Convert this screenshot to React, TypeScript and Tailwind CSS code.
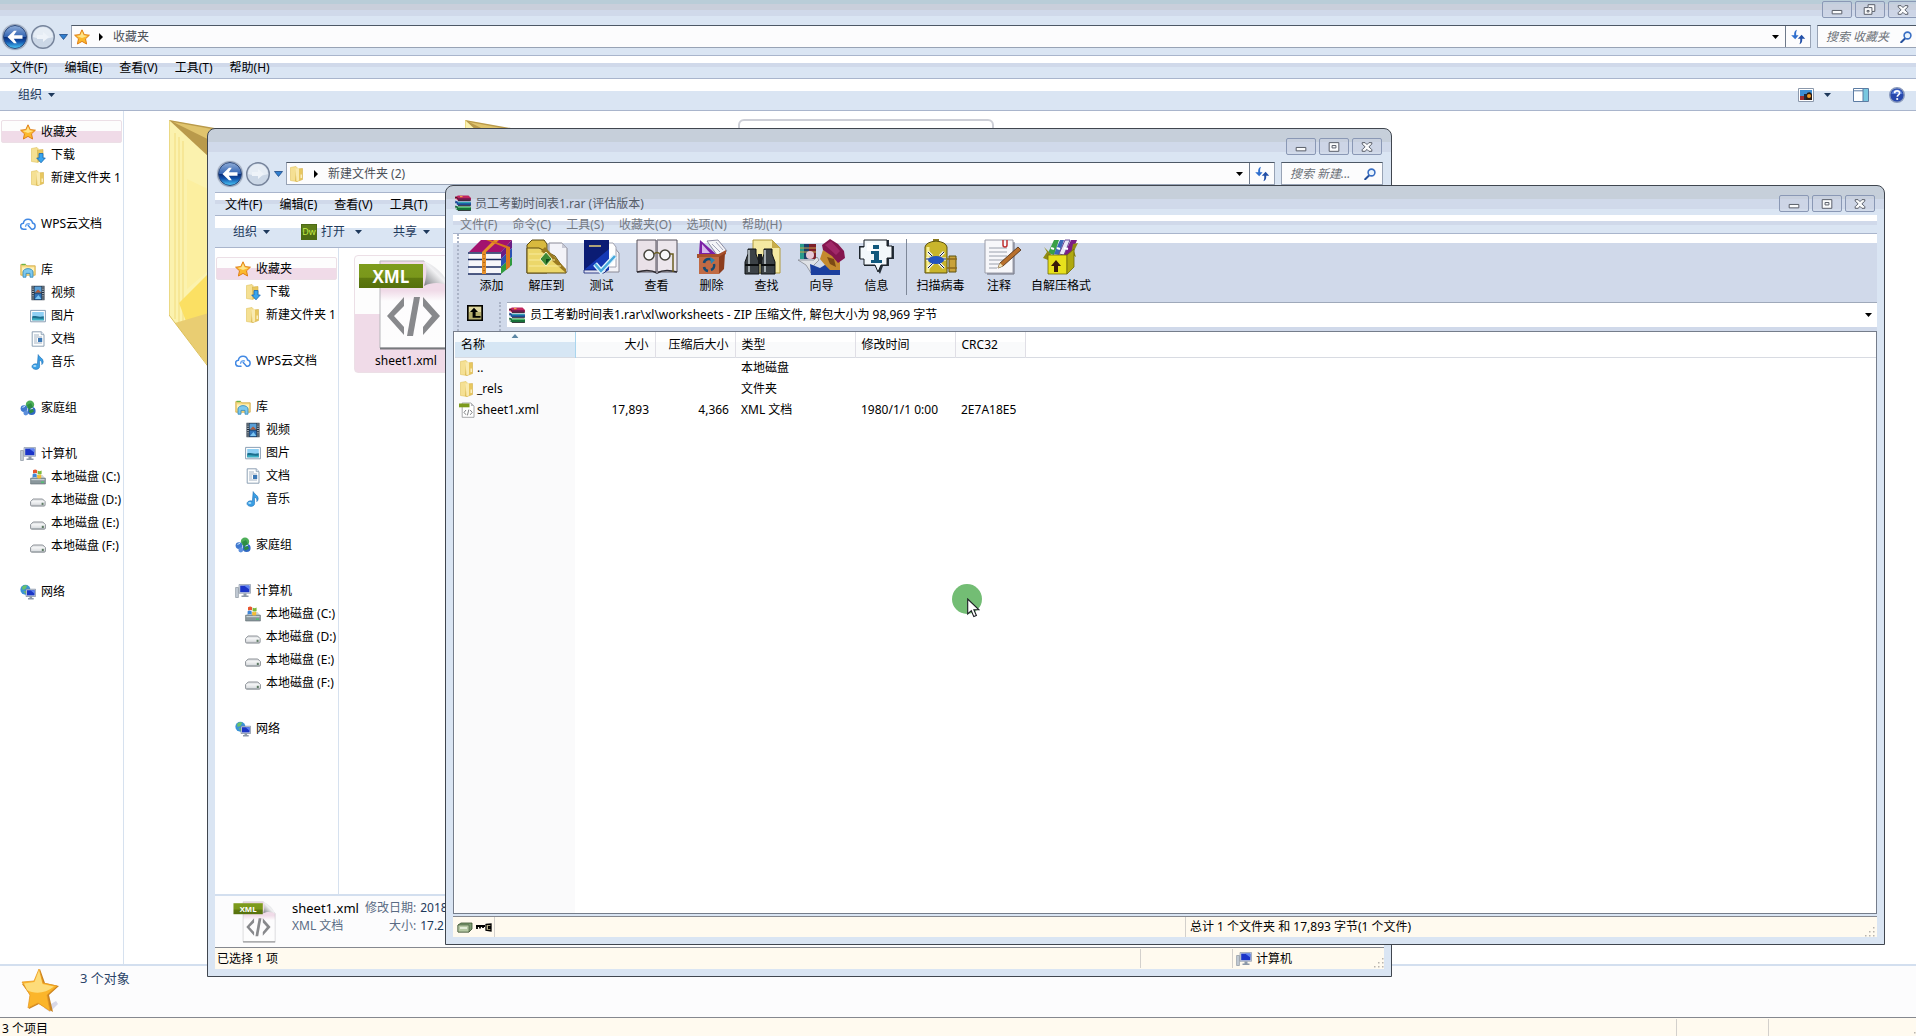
import type { ReactNode } from "react";
import clsx from "clsx";

/* ---------- small 16px icons ---------- */

type IconProps = { className?: string };

const StarIcon = ({ className = "size-4" }: IconProps) => (
  <svg viewBox="0 0 16 16" className={className}>
    <path d="M8 .8 10.2 5.6 15.4 6.2 11.5 9.8 12.6 15 8 12.4 3.4 15 4.5 9.8.6 6.2 5.8 5.6Z" fill="#fbb92c" stroke="#e07f17" strokeWidth="1" strokeLinejoin="round" />
    <path d="M8 2.6 9.6 6.3 13.4 6.9 8 9 2.6 6.9 6.4 6.3Z" fill="#fee48b" />
  </svg>
);

const FolderIcon = ({ className = "size-4" }: IconProps) => (
  <svg viewBox="0 0 16 16" className={className}>
    <path d="M1.5 1.5 7 .5 8 1.5V15.5L1.5 14.5Z" fill="#f5e093" stroke="#e0c25c" strokeWidth=".6" />
    <path d="M7.500 3 13.5 2.5V13.5L8 15.5 6.5 15Z" fill="#e8c75f" stroke="#d3b04a" strokeWidth=".6" />
    <path d="M6.5 2.5 10 2V14.6L7.5 15.3Z" fill="#f9eab0" />
    <path d="M11.6 8.5h1.2v3.5h-1.2z" fill="#fff7d8" />
  </svg>
);

const DownloadIcon = () => (
  <svg viewBox="0 0 16 16" className="size-4">
    <path d="M1.5 1.5 7 .5 8 1.5V15.5L1.5 14.5Z" fill="#f5e093" stroke="#e0c25c" strokeWidth=".6" />
    <path d="M7.5 3 13 2.5V13L8 15Z" fill="#e8c75f" stroke="#d3b04a" strokeWidth=".6" />
    <path d="M9 6.5h4v4.5h2.3L11 15.8 6.7 11H9Z" fill="#38a5ee" stroke="#1668b4" strokeWidth=".8" />
  </svg>
);

const CloudIcon = () => (
  <svg viewBox="0 0 16 16" className="size-4" fill="none" stroke="#4289e4" strokeWidth="1.5" strokeLinecap="round">
    <path d="M6 13.2H3.8a3 3 0 0 1-.4-6A4.7 4.7 0 0 1 12.6 7a3.2 3.2 0 0 1 .2 6.2h-1.2L8.2 9.6" />
    <path d="M5.6 10.2A2.6 2.6 0 0 1 9.4 8" stroke="#6ba6f0" />
  </svg>
);

const LibraryIcon = () => (
  <svg viewBox="0 0 16 16" className="size-4">
    <path d="M.8 2.6h5l1 1.2h8.4v9.4H.8Z" fill="#f7dc82" stroke="#d0a63d" strokeWidth=".8" />
    <path d="M1.6 1.8h4v1.4h-4z" fill="#69b34a" />
    <path d="M2 5.4h12v4H2z" fill="#fdf1bc" />
    <path d="M3 15.2V10a5 3.4 0 0 1 10 0v5.2h-3V11.4H6v3.8Z" fill="#7cc8ee" stroke="#3187b8" strokeWidth=".8" />
  </svg>
);

const VideoIcon = () => (
  <svg viewBox="0 0 16 16" className="size-4">
    <path d="M1.5.8h13v14.4h-13z" fill="#1e2b3a" />
    <path d="M4.5 1.5h7v6h-7z" fill="#5a9fd6" />
    <path d="M4.5 8.4h7v6.2h-7z" fill="#2e72b8" />
    <path d="M5 7.4 8 4.6l3.4 2.8Z" fill="#b05a3a" />
    <path d="M5 14 8.4 10l3 4Z" fill="#7cc5f2" />
    <path d="M3 1.4V15M13 1.4V15" stroke="#eef3f7" strokeWidth="1.2" strokeDasharray="1.2 1" />
  </svg>
);

const PictureIcon = () => (
  <svg viewBox="0 0 16 16" className="size-4">
    <path d="M.6 2.4h14.8v11.4H.6z" fill="#fff" stroke="#7f96ae" strokeWidth=".9" />
    <path d="M2.2 4h11.6v8.2H2.2z" fill="#8fd0f4" />
    <path d="M2.2 8.6c3-1.6 5.6 1 11.6-.4v4H2.2Z" fill="#1d6f8e" />
    <path d="M2.2 10.6c4-.8 7 .8 11.6 0v1.6H2.2Z" fill="#3bb0c4" />
  </svg>
);

const DocIcon = () => (
  <svg viewBox="0 0 16 16" className="size-4">
    <path d="M2.2.8h9l2.8 2.8v11.6H2.2Z" fill="#fdfefe" stroke="#8296ab" strokeWidth=".9" />
    <path d="M11.2.8v2.8H14" fill="#dbe6f0" stroke="#8296ab" strokeWidth=".7" />
    <path d="M4 4h5M4 6h8M4 8h3M4 10h3M4 12h8" stroke="#9bacbd" strokeWidth=".9" />
    <path d="M8 7h4.2v4H8z" fill="#3c78b5" />
  </svg>
);

const MusicIcon = () => (
  <svg viewBox="0 0 16 16" className="size-4">
    <path d="M8.2.6c.6 2.6 5.2 3.4 5 7.2-.1 1.4-.8 2.2-1.4 2.8.6-2.6-.8-4-2.4-4.4l.2 6.2c0 2-1.8 3-3.8 3S2 14.2 2 12.6s1.6-2.8 3.8-2.8c.8 0 1.4.2 1.6.4Z" fill="#3b9fe4" stroke="#1a6cb6" strokeWidth=".6" />
    <ellipse cx="4.8" cy="12" rx="1.6" ry="1" fill="#a9dcfa" />
  </svg>
);

const HomegroupIcon = () => (
  <svg viewBox="0 0 16 16" className="size-4">
    <circle cx="10" cy="4.8" r="4.2" fill="#4dae58" />
    <circle cx="4" cy="8.6" r="3.4" fill="#3f78cf" />
    <circle cx="11.6" cy="11" r="4" fill="#3168c4" />
    <circle cx="5.8" cy="13" r="2.4" fill="#5c8fdc" />
    <path d="M7 5 11 3l2 4-4 3ZM8.5 11l4-2.5 1.5 3-3.5 2Z" fill="#2c8d43" />
    <path d="M2.4 7.4 5 6.4M10.5 9 13 8.2" stroke="#cfe6fa" strokeWidth="1" />
  </svg>
);

const ComputerIcon = () => (
  <svg viewBox="0 0 16 16" className="size-4 shrink-0">
    <path d="M.6 4.5h2.8v10H.6z" fill="#c3ccd6" stroke="#7d8894" strokeWidth=".6" />
    <path d="M4 1.5h11.5v8.8H4z" fill="#cfd8e3" stroke="#7d8ba0" strokeWidth=".6" />
    <path d="M5.2 2.6h9.2v6.6H5.2z" fill="#1b35c8" />
    <path d="M9 2.6h5.4v4Z" fill="#5f83f0" />
    <path d="M8.5 10.5h3v2h2v1.5h-7v-1.5h2Z" fill="#8c98a8" />
  </svg>
);

const SystemDiskIcon = () => (
  <svg viewBox="0 0 16 16" className="size-4">
    <path d="M1.5 9 4 6h8.5L15 9Z" fill="#cfd6da" />
    <path d="M.6 9.2h14.8V15H.6Z" fill="#8a979c" stroke="#5d696e" strokeWidth=".6" />
    <path d="M1.4 10h13.2v1.2H1.4z" fill="#c5d0d3" />
    <path d="M11 12.5h3v1.3h-3z" fill="#49c86a" />
    <path d="M3 1.2c1.5-.8 3-.8 4 0v3.4c-1.4-.8-2.8-.6-4 0Z" fill="#e8562f" />
    <path d="M7.6 1.6c1.2.8 2.4.8 4 0V5c-1.4.8-2.8.6-4 0Z" fill="#7cb83c" />
    <path d="M2.6 5.2c1.5-.8 3-.8 4 0v3.4c-1.4-.8-2.8-.6-4 0Z" fill="#3f86d8" />
    <path d="M7.2 5.6c1.2.8 2.4.8 4 0V9c-1.4.8-2.8.6-4 0Z" fill="#f6bd33" />
  </svg>
);

const DiskIcon = () => (
  <svg viewBox="0 0 16 16" className="size-4">
    <path d="M3.2 7h9.6l2.6 2.6V13c0 .8-.4 1.2-1.2 1.2H1.8c-.8 0-1.2-.4-1.2-1.2V9.6Z" fill="#e6e8ea" stroke="#7f858b" strokeWidth=".9" />
    <path d="M1.2 9.9h13.6" stroke="#fff" strokeWidth=".8" />
    <path d="M1.2 13.4h13.6" stroke="#a3a9ae" strokeWidth="1" />
    <path d="M11.8 10.8h2V13h-2z" fill="#5d7a63" />
  </svg>
);

const NetworkIcon = () => (
  <svg viewBox="0 0 16 16" className="size-4">
    <circle cx="5.4" cy="5.8" r="5" fill="#3b93d6" />
    <path d="M2 3c2-2.4 4-2 5.4-1.4L5.4 5 2.6 6Zm1.5 4.5L6 7v3Z" fill="#69c26a" />
    <path d="M6 5.2h9.6v7.3H6z" fill="#cfd8e3" stroke="#6c7b92" strokeWidth=".6" />
    <path d="M7 6.2h7.6v5.2H7z" fill="#1c37c6" />
    <path d="M10.5 6.2h4.1v3.5Z" fill="#5f83f0" />
    <path d="M9.5 12.5h2.6v1.5h1.6v1.4H8v-1.4h1.5Z" fill="#8c98a8" />
  </svg>
);

const RarIcon = () => (
  <svg viewBox="0 0 16 16" className="size-4 shrink-0">
    <path d="M0 2 3 .4H13.5L16 3v2l-1.5.6L3 5.6 0 4Z" fill="#c0265e" />
    <path d="M3 3.2h12.5v2H3z" fill="#6b1a4e" />
    <path d="M0 2 3 3.4M0 7l3 1.2M0 11.6l3 1.4" stroke="#111" strokeWidth=".8" />
    <path d="M.4 5.6 3 6.8h12.5L16 8.4v1.8H3L.4 8.8Z" fill="#1c4fa0" />
    <path d="M3 7.2h12.5v1H3z" fill="#36b8b4" />
    <path d="M.4 10.4 3 11.6h12.5l.5 1.6V15.5H3L.4 14Z" fill="#17713a" />
    <path d="M3 12h12.5v1H3z" fill="#4fc06a" />
    <path d="M3 5.6h12.8M3 10.4h12.8M3 15.6h12.8" stroke="#16121c" strokeWidth=".8" />
    <path d="M1 3.8v1.5M1 8.2v1.6M1 12.8v1.4" stroke="#e9e9ec" strokeWidth="1.2" />
    <path d="M5 1h2.5v1.2H5z" fill="#f0a03c" />
  </svg>
);

const SmallXmlIcon = () => (
  <svg viewBox="0 0 16 16" className="size-4">
    <path d="M3.2 1H12l3 3v11.3H3.2Z" fill="#fff" stroke="#909396" strokeWidth=".8" />
    <path d="M0 1.5h10.5v3.8H0z" fill="#7c9a1d" />
    <path d="M12 1v3h3Z" fill="#b9bcc0" />
    <path d="M7 8 5 10.4 7 12.8M11.2 8l2 2.4-2 2.4M9.8 7.6l-1.4 5.8" fill="none" stroke="#808285" strokeWidth="1" />
  </svg>
);

const XmlFileIcon = ({ className }: IconProps) => (
  <svg viewBox="0 0 96 96" className={className}>
    <defs>
      <linearGradient id="page" x1="0" y1="0" x2="0" y2="1">
        <stop offset="0" stopColor="#f0dbe8" />
        <stop offset=".34" stopColor="#f0dbe8" />
        <stop offset=".46" stopColor="#fdfcfd" />
        <stop offset="1" stopColor="#fdfdfd" />
      </linearGradient>
      <linearGradient id="xmlband" x1="0" y1="0" x2="0" y2="1">
        <stop offset="0" stopColor="#7d9c1d" />
        <stop offset=".55" stopColor="#7a971b" />
        <stop offset=".6" stopColor="#5f7a10" />
        <stop offset="1" stopColor="#55700c" />
      </linearGradient>
      <linearGradient id="curl" x1="0" y1="1" x2="1" y2="0">
        <stop offset="0" stopColor="#77797d" />
        <stop offset=".5" stopColor="#f1f1f3" />
        <stop offset="1" stopColor="#b8babd" />
      </linearGradient>
    </defs>
    <path d="M22 4H66L92 29V91H22Z" fill="url(#page)" stroke="#b7b7bb" strokeWidth="1" />
    <path d="M22 91.5H92" stroke="#77797d" strokeWidth="2" />
    <path d="M66 4C70 12 68 22 66 29 76 24 86 26 92 30 88 18 76 8 66 4Z" fill="url(#curl)" />
    <path d="M1 7H65V31H1Z" fill="url(#xmlband)" />
    <path d="M46 40 29 59 46 78V70L36 59 46 49Z" fill="#88898c" />
    <path d="M65 40 82 59 65 78V70L74 59 65 49Z" fill="#88898c" />
    <path d="M56 40H62L55 79H49Z" fill="#88898c" />
    <text x="33" y="25.5" textAnchor="middle" fontSize="17" fontWeight="700" fill="#fff" fontFamily="Open Sans, sans-serif">XML</text>
  </svg>
);

const BigStar = () => (
  <svg viewBox="0 0 40 46" className="h-[46px] w-10">
    <path d="M24 40 36 33 38 36 30 44Z" fill="#c9c9dd" opacity=".7" />
    <path d="M20 1 25 15 39 18 29 27 33 44 19 36 9 41 10 27 2 16 15 14Z" fill="#c98320" />
    <path d="M19 1 23 15 37 18 27 27 30 43 18 35 8 40 10 27 2 14 14 13Z" fill="#fbb52a" stroke="#e89a24" strokeWidth=".8" />
    <path d="M19 2 22.5 16 34 18.5C25 26 14 26 7 22L4 15.5 14.5 14Z" fill="#fddc7a" />
  </svg>
);

const BigFolder = () => (
  <svg viewBox="0 0 256 256" className="size-64">
    <path d="M0 1 120 24V214L52 262 0 196Z" fill="#fbf2ae" />
    <path d="M0 1 120 22V112Z" fill="#b99a4b" />
    <path d="M4 3 120 24V60Z" fill="#e0c46d" />
    <path d="M6 14V200M10 18V205M14 22V210" stroke="#f3df86" strokeWidth="1.2" />
    <path d="M18 60V170L60 134V80Z" fill="#fcefa0" />
    <path d="M10 184 60 134V220L20 210Z" fill="#fbe063" />
    <path d="M6 204 60 188V256H46Z" fill="#e9cd72" />
    <path d="M0 1V196L44 254" fill="none" stroke="#dcc05c" strokeWidth="1" />
  </svg>
);

const DwIcon = () => (
  <svg viewBox="0 0 16 16" className="size-4">
    <path d="M0 0h16v16H0z" fill="#4c6a14" />
    <path d="M1 1h14v7H1z" fill="#5d7d1a" />
    <text x="8" y="11" textAnchor="middle" fontSize="9" fill="#c8f04a" fontFamily="Open Sans, sans-serif">Dw</text>
  </svg>
);

const ThumbIcon = () => (
  <svg viewBox="0 0 16 14" className="h-3.5 w-4">
    <path d="M.5.5h15v13H.5z" fill="#fff" stroke="#8b98ab" />
    <path d="M2 2h12v10H2z" fill="#3d8fd6" />
    <path d="M2 8h4v4H2z" fill="#9c2f33" />
    <path d="M6 6h3v6H6z" fill="#232a3a" />
    <path d="M9 5c3-2 5 0 5 2v5H8Z" fill="#2a1c14" />
    <circle cx="11" cy="8" r="2" fill="#f09a2a" />
  </svg>
);

const PreviewPaneIcon = () => (
  <svg viewBox="0 0 16 14" className="h-3.5 w-4">
    <path d="M.5.5h15v13H.5z" fill="#fff" stroke="#5c7ca3" />
    <path d="M1 2.8h9" stroke="#5c7ca3" />
    <path d="M10 1h5v12h-5z" fill="#79c7df" />
    <path d="M10 1v12" stroke="#5c7ca3" />
  </svg>
);

const HelpIcon = () => (
  <svg viewBox="0 0 16 16" className="size-4">
    <circle cx="8" cy="8" r="7.3" fill="#2748ad" stroke="#8b9bbd" strokeWidth="1.4" />
    <path d="M2.5 7a5.6 5.6 0 0 1 11 0Z" fill="#5a7fd8" />
    <path d="M5.6 6.2C5.6 3.2 10.6 3.2 10.6 6c0 2-2.3 1.9-2.3 3.8" fill="none" stroke="#fff" strokeWidth="1.7" />
    <circle cx="8.2" cy="12" r="1.1" fill="#fff" />
  </svg>
);

const Caret = ({ className = "text-[#1e395b]" }: IconProps) => (
  <svg viewBox="0 0 7 4" className={clsx("h-1 w-[7px]", className)}>
    <path d="M0 0h7L3.5 4Z" fill="currentColor" />
  </svg>
);

const RefreshIcon = () => (
  <svg viewBox="0 0 16 16" className="size-4">
    <path d="M7 .8C4.6 1.4 4 3.4 4.2 6.2H1.2L5.2 10.2 8.6 6.2H6.2C6 4 6.2 2.4 7 .8Z" fill="#2f6fce" />
    <path d="M9.4 15.2C11.8 14.6 12.4 12.6 12.2 9.8H15.2L11.6 5.8 7.8 9.8H10.2C10.4 12 10.2 13.6 9.4 15.2Z" fill="#2350a8" />
  </svg>
);

const SearchIcon = () => (
  <svg viewBox="0 0 12 12" className="size-3 shrink-0">
    <path d="M5 7.5 1.2 11.2" stroke="#25509c" strokeWidth="2" strokeLinecap="round" />
    <circle cx="7.5" cy="4.5" r="3.4" fill="#eaf4fd" stroke="#3a6fc4" strokeWidth="1.6" />
  </svg>
);

const Grip = () => (
  <svg viewBox="0 0 10 10" className="size-2.5 shrink-0 self-end" fill="#b9b4ae">
    <path d="M8 0h1.5v1.5H8zM8 4h1.5v1.5H8zM8 8h1.5v1.5H8zM4 4h1.5v1.5H4zM4 8h1.5v1.5H4zM0 8h1.5v1.5H0z" />
  </svg>
);

/* ---------- window chrome ---------- */

const controlGlyphs = {
  min: <path d="M9.5 8.5h10V12h-10z" />,
  max: <path d="M9.5 3.5h10v9h-10zM12.5 6.5h4V9h-4z" />,
  restore: <path d="M12.5 2.5h7v7h-3v3h-8v-7h4zM11.5 8.5h2v1.5h-2zM13 5.5h3.500V9" />,
  close: <path d="M9.5 3.5h3l2 2 2-2h3v1.5L16.5 7.8l3 3v1.7h-3l-2-2-2 2h-3v-1.7l3-3-3-2.8z" />,
};

const WindowControls = ({ maximized }: { maximized?: boolean }) => (
  <div className="flex gap-[3px]">
    {(["min", maximized ? "restore" : "max", "close"] as const).map((kind) => (
      <button key={kind} aria-label={kind} className="h-[17px] w-[30px] rounded-[2px] border border-[#8a98b5] bg-[#c9d2e2]/50">
        <svg viewBox="0 0 29 15" className="h-[15px] w-full" fill="#fafbfc" stroke="#565b66" strokeWidth="1">
          {controlGlyphs[kind]}
        </svg>
      </button>
    ))}
  </div>
);

const NavButtons = () => (
  <div className="flex h-6 w-[71px] items-center gap-1 pl-[3px]">
    <button aria-label="后退" className="size-6 rounded-full shadow-[0_0_1px_1px_#8f9bb0]">
      <svg viewBox="0 0 24 24" className="size-6">
        <defs>
          <linearGradient id="orb" x1="0" y1="0" x2="0" y2="1">
            <stop offset="0" stopColor="#8fadd8" />
            <stop offset=".48" stopColor="#3566b4" />
            <stop offset=".52" stopColor="#0a2f7c" />
            <stop offset=".7" stopColor="#1254ac" />
            <stop offset="1" stopColor="#4ccbfa" />
          </linearGradient>
        </defs>
        <circle cx="12" cy="12" r="11.5" fill="url(#orb)" stroke="#2c4777" />
        <path d="M4.5 12 11 5.8h2.8L10.8 10.2H19.5V13.8H10.8L13.8 18.2H11Z" fill="#fff" />
      </svg>
    </button>
    <button aria-label="前进" className="size-6 rounded-full">
      <svg viewBox="0 0 24 24" className="size-6">
        <circle cx="12" cy="12" r="11.3" fill="#cbd7e6" stroke="#76849b" strokeWidth="1.4" />
        <path d="M2 12a10 10 0 0 1 20 0c-6 2-14 2-20 0Z" fill="#e6edf5" />
        <path d="M6 10h6V7l6 5-6 5v-3H6Z" fill="#eef3f9" />
      </svg>
    </button>
    <button aria-label="最近的页面">
      <svg viewBox="0 0 9 6" className="h-1.5 w-[9px]">
        <path d="M.5.5h8L4.5 5.5Z" fill="#2f7fd0" stroke="#1d4a86" strokeWidth=".8" />
      </svg>
    </button>
  </div>
);

type SideItem = { label: string; icon: ReactNode; sub?: boolean; selected?: boolean };

const sideGroups: SideItem[][] = [
  [
    { label: "收藏夹", icon: <StarIcon />, selected: true },
    { label: "下载", icon: <DownloadIcon />, sub: true },
    { label: "新建文件夹 1", icon: <FolderIcon />, sub: true },
  ],
  [{ label: "WPS云文档", icon: <CloudIcon /> }],
  [
    { label: "库", icon: <LibraryIcon /> },
    { label: "视频", icon: <VideoIcon />, sub: true },
    { label: "图片", icon: <PictureIcon />, sub: true },
    { label: "文档", icon: <DocIcon />, sub: true },
    { label: "音乐", icon: <MusicIcon />, sub: true },
  ],
  [{ label: "家庭组", icon: <HomegroupIcon /> }],
  [
    { label: "计算机", icon: <ComputerIcon /> },
    { label: "本地磁盘 (C:)", icon: <SystemDiskIcon />, sub: true },
    { label: "本地磁盘 (D:)", icon: <DiskIcon />, sub: true },
    { label: "本地磁盘 (E:)", icon: <DiskIcon />, sub: true },
    { label: "本地磁盘 (F:)", icon: <DiskIcon />, sub: true },
  ],
  [{ label: "网络", icon: <NetworkIcon /> }],
];

const Sidebar = () => (
  <nav className="flex w-[124px] shrink-0 flex-col gap-[23px] overflow-hidden border-r border-[#d6e1ef] px-px pt-[9px]">
    {sideGroups.map((group) => (
      <ul key={group[0].label}>
        {group.map((item) => (
          <li key={item.label}>
            <a
              href="#"
              className={clsx(
                "flex h-[23px] items-center gap-[5px] whitespace-nowrap border",
                item.sub ? "pl-7" : "pl-[18px]",
                item.selected
                  ? "rounded-xs border-[#ecdfe6] bg-[linear-gradient(#fdfdfd_50%,#f0dbe8_50%)]"
                  : "border-transparent"
              )}
            >
              {item.icon}
              {item.label}
            </a>
          </li>
        ))}
      </ul>
    ))}
  </nav>
);

interface ExplorerProps {
  maximized?: boolean;
  pathIcon: ReactNode;
  path: string;
  search: string;
  menus: string[];
  toolbar: ReactNode;
  details: ReactNode;
  status: string;
  statusRight?: ReactNode;
  children: ReactNode;
}

const Explorer = ({
  maximized,
  pathIcon,
  path,
  search,
  menus,
  toolbar,
  details,
  status,
  statusRight,
  children,
}: ExplorerProps) => (
  <>
    <header className="h-[55px] shrink-0">
      <div className="flex h-[25px] justify-end pr-0.5 pt-px">
        <WindowControls maximized={maximized} />
      </div>
      <div className="flex">
        <NavButtons />
        <div className="flex h-[23px] flex-1 items-center border border-[#98a3b5] border-t-[#4d5866] bg-[#fcfcfd] pl-0.5 text-[#4b5058]">
          {pathIcon}
          <svg viewBox="0 0 4 8" className="ml-[9px] h-2 w-1">
            <path d="M0 0 4 4 0 8Z" fill="#000" />
          </svg>
          <span className="ml-2.5 flex-1">{path}</span>
          <button aria-label="展开" className="mr-1 px-0.5">
            <Caret className="text-black" />
          </button>
          <button aria-label="刷新" className="flex h-full w-[25px] items-center justify-center border-l border-[#6f7a8b]">
            <RefreshIcon />
          </button>
        </div>
        <label className="ml-1.5 mr-px flex h-[23px] w-[102px] items-center border border-[#98a3b5] border-t-[#4d5866] bg-[#fcfcfd] pl-2 pr-1.5">
          <input aria-label={search} placeholder={search} className="w-0 flex-1 text-xs italic outline-none placeholder:text-[#6d7279]" />
          <SearchIcon />
        </label>
      </div>
    </header>
    <div className="flex h-6 shrink-0 items-center gap-[17px] border-y border-[#a9b5cc] bg-[linear-gradient(#fff_0_7px,#d0d9ea_7px_11px,#dae5f3_11px)] pl-2.5 pt-0.5">
      {menus.map((m) => (
        <button key={m}>{m}</button>
      ))}
    </div>
    <div className="flex h-8 shrink-0 items-center border-b border-[#a9b5cc] bg-[linear-gradient(#fff_12px,#dae5f3_12px)] pl-[18px] text-[#1e395b]">
      {toolbar}
    </div>
    <div className="flex min-h-0 flex-1 bg-white">
      <Sidebar />
      <div className="min-w-0 flex-1 overflow-hidden">{children}</div>
    </div>
    <div className="flex h-[53px] shrink-0 border-t-2 border-[#d3dfef] bg-[#fcfcfd]">{details}</div>
    <footer className="flex h-[22px] shrink-0 items-center border-t border-[#85888f] bg-[#fffaef]">
      <span className="flex-1 pl-0.5">{status}</span>
      <span className="h-[19px] w-[92px] border-l border-[#d3d0cc]" />
      <span className="flex h-[19px] w-[152px] items-center gap-1 border-l border-[#d3d0cc] pl-[3px]">
        {statusRight}
        <span className="flex-1" />
        <Grip />
      </span>
    </footer>
  </>
);

const ToolButton = ({ children, className }: { children: ReactNode; className?: string }) => (
  <button className={clsx("flex items-center", className)}>
    {children}
    <Caret />
  </button>
);

/* ---------- WinRAR ---------- */

const rarTools: { label: string; width: string; icon: ReactNode }[] = [
  {
    label: "添加",
    width: "w-[55px]",
    icon: (
      <g transform="translate(-2 0)">
        <path d="M1 13 13 1H44L33 13Z" fill="#a3126e" />
        <path d="M33 13 44 1V9L33 20Z" fill="#6a1d84" />
        <path d="M33 20 44 9V18L33 28Z" fill="#2a52b4" />
        <path d="M33 28 44 18V26L33 35Z" fill="#2f9a3e" />
        <path d="M1 14H33V35H1Z" fill="#f6f6fa" />
        <path d="M0 14H33M0 20.5H33M0 28H33M0 35H33" stroke="#1a2a5e" strokeWidth="1.4" />
        <path d="M14 13 26 1H31L18 13V35H14Z" fill="#e58f2a" />
        <path d="M18 1 22 1 42 8V28L38 31V9Z" fill="#d9781c" />
        <path d="M16 15V34" stroke="#7c4510" strokeDasharray="1 3" />
      </g>
    ),
  },
  {
    label: "解压到",
    width: "w-[55px]",
    icon: (
      <>
        <path d="M24 4h13l5 5v24H24Z" fill="#f3f3f8" stroke="#8a8a96" />
        <path d="M37 4v5h5" fill="#c6c8d4" />
        <path d="M2 6 7 1h12l3 4v29H2Z" fill="#d8b93e" stroke="#5c4a10" />
        <path d="M2 9 14 9 30 17 41 33V34H2Z" fill="#ecd76a" stroke="#5c4a10" />
        <path d="M20 8 41 30V34L16 12Z" fill="#9a7a20" />
        <path d="M4 15h18M4 21h26M4 27h32" stroke="#f8eb9c" />
        <path d="M21 13 27 20 21 27 15 20Z" fill="#3e8a36" stroke="#f7f2c4" />
        <path d="M21 20 25 20 21 25Z" fill="#0f4a1a" />
      </>
    ),
  },
  {
    label: "测试",
    width: "w-[55px]",
    icon: (
      <g transform="translate(-1 0)">
        <path d="M20 7h14l6 7v19H20Z" fill="#f3f3f8" stroke="#8a8a96" />
        <path d="M24 4h10l3 4v20H24Z" fill="#fff" stroke="#a0a2b0" />
        <path d="M5 1H30V31L25 34H5Z" fill="#1538b4" />
        <path d="M5 1H30V10L5 31Z" fill="#0b1c74" />
        <path d="M5 31H28L25 34H5Z" fill="#dfe2f0" stroke="#0b1c74" strokeWidth=".8" />
        <path d="M10 7h12" stroke="#e6cf7a" strokeWidth="1.5" />
        <path d="M16 25 22 32 36 17" fill="none" stroke="#dff4ff" strokeWidth="5" />
        <path d="M16 25 22 32 36 17" fill="none" stroke="#46a8dc" strokeWidth="2.5" />
      </g>
    ),
  },
  {
    label: "查看",
    width: "w-[55px]",
    icon: (
      <>
        <path d="M2 1H21V33H2Z" fill="#e9e1e8" stroke="#55505a" />
        <path d="M22 1H42V33H22Z" fill="#ece6ec" stroke="#55505a" />
        <path d="M2 33c7-2 15-2 20 1 5-3 13-3 20-1" fill="none" stroke="#2c2a30" strokeWidth="1.5" />
        <path d="M22 1V34" stroke="#8c8792" strokeWidth="2" />
        <circle cx="14" cy="16" r="5" fill="#f8f8fa" stroke="#45443c" strokeWidth="1.5" />
        <circle cx="30" cy="16" r="5" fill="#f8f8fa" stroke="#45443c" strokeWidth="1.5" />
        <path d="M19 15q3-3 6 0M35 15h3v18" fill="none" stroke="#6b5f22" strokeWidth="1.5" />
      </>
    ),
  },
  {
    label: "删除",
    width: "w-[55px]",
    icon: (
      <>
        <path d="M10 1 26 15H9Z" fill="#7b1fa6" />
        <path d="M12 5 20 14H12Z" fill="#d7b6ea" />
        <path d="M17 2 28 1 37 12 27 16Z" fill="#f4f4f8" stroke="#8c8ca0" />
        <path d="M22 5 30 13M26 3l7 8" stroke="#a0a4b8" />
        <path d="M7 15H29L36 11V15L29 19H7Z" fill="#a7502c" />
        <path d="M9 18H29V35H9Z" fill="#c06a44" />
        <path d="M29 18 35 14 34 30 29 35Z" fill="#8c3d1e" />
        <path d="M14 24a5 5 0 0 1 8-3M24 25a5 5 0 0 1-3 6M18 32a5 5 0 0 1-4-4" fill="none" stroke="#134a74" strokeWidth="2.5" />
        <path d="M20 18l5 3-4 4Z" fill="#2d84b0" />
      </>
    ),
  },
  {
    label: "查找",
    width: "w-[55px]",
    icon: (
      <g transform="translate(-5 0)">
        <path d="M13 1H32L40 9V34H13Z" fill="#f4e9a2" stroke="#b09a3c" />
        <path d="M32 1V9H40Z" fill="#c8ad4a" />
        <path d="M8 10h8v5l3 8v12H5V23l3-8ZM24 10h8v5l3 8v12H21V23l3-8Z" fill="#3c4246" stroke="#0f1214" />
        <path d="M18 15h4v10h-4z" fill="#191c1e" />
        <path d="M9 11v22M25 11v22" stroke="#a4acb0" strokeWidth="2" />
        <path d="M5 26h14M21 26h14" stroke="#0b0d0e" strokeWidth="2" />
      </g>
    ),
  },
  {
    label: "向导",
    width: "w-[55px]",
    icon: (
      <g transform="translate(-2 0)">
        <path d="M2 5H6V20H2Z" fill="#2a9a8c" />
        <path d="M6 5H11V20H6Z" fill="#1c3e6a" />
        <path d="M11 5H18V20H11Z" fill="#7c1f2a" />
        <path d="M2 9h16M2 13h16" stroke="#c9a34a" />
        <circle cx="12" cy="16" r="4" fill="#e6c8d6" />
        <path d="M0 21h16l3-3 2 3-5 5-3 8-5-8Z" fill="#dfe2e6" stroke="#7c7f88" strokeWidth=".7" />
        <path d="M12 25 22 29 30 24 42 30V36H13Z" fill="#1b3f9e" />
        <path d="M25 11 36 17 42 20V31L32 31 27 26 22 20Z" fill="#c48a2e" />
        <path d="M29 18 36 20 38 28 32 25Z" fill="#7c4a14" />
        <path d="M24 6 32 0 40 5 46 12 47 19 40 24 34 17 25 11Z" fill="#84164e" />
        <path d="M27 6 33 2 42 12 38 16Z" fill="#a02868" />
      </g>
    ),
  },
  {
    label: "信息",
    width: "w-[55px]",
    icon: (
      <>
        <path d="M9 1H34V7H39V20H34V27H28L25 35 20 27H9V20H4V7H9Z" fill="#26303a" />
        <path d="M9 1H32V7H37V19H32V26H26L23 33 20 26H9V20H5V8H9Z" fill="#f3f8fb" stroke="#161c22" />
        <path d="M12 4H20V12H12Z" fill="#fff" />
        <path d="M18 6h6v4h-6zM16 12h8v9h3v3H16v-3h3v-6h-3z" fill="#11587c" />
      </>
    ),
  },
];

const rarExtras: typeof rarTools = [
  {
    label: "扫描病毒",
    width: "w-[65px]",
    icon: (
      <g transform="translate(-3 0)">
        <path d="M17 0h6v3h-6z" fill="#8a7a1c" />
        <path d="M9 8Q10 3 20 2 30 3 31 8V34H9Z" fill="#c9b52c" stroke="#5c5210" />
        <path d="M12 8v25" stroke="#f6ee94" strokeWidth="3" />
        <path d="M33 17H40V33H33Z" fill="#c9a23a" stroke="#5c5210" />
        <path d="M31 20h10M31 29h10" stroke="#8c6a1c" strokeWidth="1.5" />
        <path d="M12 13l4 4M28 13l-4 4M10 20h20M12 29l5-5M28 29l-5-5" stroke="#f2f6fd" strokeWidth="3" />
        <path d="M12 13l4 4M28 13l-4 4M10 20h20M12 29l5-5M28 29l-5-5" stroke="#16213e" strokeWidth="1" />
        <ellipse cx="20" cy="21" rx="8" ry="4" fill="#2454c0" />
      </g>
    ),
  },
  {
    label: "注释",
    width: "w-[52px]",
    icon: (
      <>
        <path d="M8 1H36V34H8Z" fill="#f7f7fa" stroke="#9a9ca8" />
        <path d="M37 3V35H10" fill="none" stroke="#6c6e7a" />
        <path d="M12 9h18M12 13h18M12 17h18M12 21h16M12 25h10M12 29h8" stroke="#9aa0ac" />
        <path d="M26 1v5a2 2 0 0 0 4 0V1" fill="none" stroke="#c03030" strokeWidth="1.5" />
        <path d="M41 8 44 11 26 27 21 29 23 24Z" fill="#b8702c" stroke="#4a2a10" strokeWidth=".8" />
        <path d="M21 29l2-5 3 3Z" fill="#efe3b4" />
      </>
    ),
  },
  {
    label: "自解压格式",
    width: "w-[72px]",
    icon: (
      <g transform="translate(4 0)">
        <path d="M5 14 11 1 16 1 11 16Z" fill="#3aa047" />
        <path d="M11 15 17 1 21 1 16 16Z" fill="#3a68b8" />
        <path d="M16 15 22 1 27 1 21 16Z" fill="#e9eaf6" stroke="#6a4a9a" />
        <path d="M21 16 28 1 34 1 28 16Z" fill="#7c1f86" />
        <path d="M8 9l3 1M14 9l3 1M21 9l4 1" stroke="#fff" strokeWidth="2" />
        <path d="M1 8 8 15 5 21 0 19 4 13ZM30 5 35 4 31 12 33 18 28 15Z" fill="#8f8a14" />
        <path d="M5 16H24V35H5Z" fill="#e8e11c" stroke="#6e6a0c" strokeWidth=".8" />
        <path d="M24 16 31 10V28L24 35Z" fill="#b0a910" stroke="#6e6a0c" strokeWidth=".8" />
        <path d="M13 21 18 27H15V33H11V27H8Z" fill="#3a1a08" />
      </g>
    ),
  },
];

const RarTool = ({ label, width, icon }: (typeof rarTools)[number]) => (
  <button className={clsx("flex flex-col items-center gap-[3px]", width)}>
    <svg viewBox="0 0 44 36" className="h-9 w-11 overflow-visible">
      {icon}
    </svg>
    {label}
  </button>
);

const DottedGrip = () => <div className="w-0.5 border-l-2 border-dotted border-[#aab3c6]" />;

const columns = [
  { label: "名称", width: "w-[120px]" },
  { label: "大小", width: "w-20", right: true },
  { label: "压缩后大小", width: "w-20", right: true },
  { label: "类型", width: "w-[120px]" },
  { label: "修改时间", width: "w-[100px]" },
  { label: "CRC32", width: "w-[70px]" },
];

const files = [
  { name: "..", icon: <FolderIcon />, cells: ["", "", "本地磁盘", "", ""] },
  { name: "_rels", icon: <FolderIcon />, cells: ["", "", "文件夹", "", ""] },
  { name: "sheet1.xml", icon: <SmallXmlIcon />, cells: ["17,893", "4,366", "XML 文档", "1980/1/1 0:00", "2E7A18E5"] },
];

const RarWindow = () => (
  <section className="absolute left-[445px] top-[185px] flex h-[760px] w-[1440px] flex-col rounded-t-lg border border-[#40464f] bg-[#dae5f3] bg-[linear-gradient(#c6cfda_0_13px,#d0d9ea_13px_23px,#dae5f3_23px)] px-[7px] pb-[7px]">
    <header className="flex h-[29px] shrink-0 items-start gap-1 px-0.5 pt-[9px] text-[#555c68]">
      <RarIcon />
      <h1 className="flex-1 leading-[18px]">员工考勤时间表1.rar (评估版本)</h1>
      <WindowControls />
    </header>
    <div className="flex h-[19px] shrink-0 items-center gap-[15px] border-b border-[#a9b5cc] bg-[linear-gradient(#fff_0_6px,#d0d9ea_6px_10px,#dae5f3_10px)] pl-[7px] pt-0.5 text-[#757a83]">
      {["文件(F)", "命令(C)", "工具(S)", "收藏夹(O)", "选项(N)", "帮助(H)"].map((m) => (
        <button key={m}>{m}</button>
      ))}
    </div>
    <div className="flex h-[97px] shrink-0 bg-[linear-gradient(#fff_0_9px,#d0d9ea_9px)] pl-1">
      <DottedGrip />
      <div className="min-w-0 flex-1">
        <div className="flex h-[68px] pl-[5px] pt-[5px]">
          {rarTools.map((tool) => (
            <RarTool key={tool.label} {...tool} />
          ))}
          <div className="ml-0.5 mr-px h-14 w-px bg-[#7e8899]" />
          {rarExtras.map((tool) => (
            <RarTool key={tool.label} {...tool} />
          ))}
        </div>
        <div className="flex h-[29px] pl-2">
          <button aria-label="向上一级" className="mt-[3px] size-4">
            <svg viewBox="0 0 16 16" className="size-4">
              <path d="M.8.8h14.4v14.4H.8z" fill="#b5ad6c" stroke="#000" strokeWidth="1.6" />
              <path d="M2 2h12v5H2z" fill="#ddd6a0" />
              <path d="M7 2.8 11 7H8.6V11h5v1.8H5.6V7H3Z" fill="#000" />
            </svg>
          </button>
          <div className="ml-4 flex">
            <DottedGrip />
          </div>
          <div className="mb-1 ml-1.5 flex flex-1 items-center gap-[5px] border-t border-t-[#9fa9ba] bg-white pl-0.5 pr-[5px]">
            <RarIcon />
            <span className="flex-1">员工考勤时间表1.rar\xl\worksheets - ZIP 压缩文件, 解包大小为 98,969 字节</span>
            <button aria-label="展开">
              <Caret className="text-black" />
            </button>
          </div>
        </div>
      </div>
    </div>
    <div className="mb-0.5 flex min-h-0 flex-1 flex-col border border-[#757d8b] bg-white pl-px">
      <table className="w-full table-fixed border-collapse">
        <thead>
          <tr className="h-[25px] border-b border-[#d8dbe2]">
            {columns.map((c, i) => (
              <th
                key={c.label}
                className={clsx(
                  "relative border-r px-1.5 pt-0.5 font-normal",
                  c.width,
                  c.right ? "text-right" : "text-left",
                  i === 0
                    ? "border-[#a9d5ee] bg-[linear-gradient(#f6fafd_40%,#d6e6f4_40%)]"
                    : "border-[#e0dfe6] bg-[linear-gradient(#fff_40%,#f9fafb_40%)]"
                )}
              >
                {c.label}
                {i === 0 && (
                  <svg viewBox="0 0 7 4" className="absolute left-1/2 top-0.5 h-1 w-[7px] -translate-x-1/2">
                    <path d="M0 4 3.5 0 7 4Z" fill="#5b87a5" />
                  </svg>
                )}
              </th>
            ))}
            <th />
          </tr>
        </thead>
        <tbody>
          {files.map((f) => (
            <tr key={f.name} className="h-[21px]">
              <td className="bg-[#fafafb] pl-1">
                <span className="flex items-center gap-0.5">
                  {f.icon}
                  {f.name}
                </span>
              </td>
              {f.cells.map((cell, i) => (
                <td key={i} className={clsx("whitespace-nowrap px-1.5", i < 2 && "text-right")}>
                  {cell}
                </td>
              ))}
              <td />
            </tr>
          ))}
        </tbody>
      </table>
      <div className="w-[120px] flex-1 bg-[#fafafb]" />
    </div>
    <footer className="flex h-[21px] shrink-0 items-center border-t border-[#85888f] bg-[#fffaef]">
      <span className="flex h-5 w-[42px] items-center gap-[3px] border-r border-[#d3d0cc] pl-1">
        <svg viewBox="0 0 16 11" className="h-[11px] w-4">
          <path d="M1 3 4 1h11v6l-3 3H1Z" fill="#7d9a72" stroke="#39502f" strokeWidth=".8" />
          <path d="M1 3h11v7H1z" fill="#b5c8a4" stroke="#39502f" strokeWidth=".6" />
          <path d="M3 6h7" stroke="#f2f8ea" strokeWidth="1.5" />
        </svg>
        <svg viewBox="0 0 16 9" className="h-[9px] w-4">
          <path d="M0 3h9M1 3v3M4 3v2.5M7 3v2" stroke="#000" strokeWidth="1.8" />
          <path d="M10 1.5 15 1v7l-5-.8ZM12.5 3.5H14v2h-1.5z" fill="#d8cfa0" stroke="#000" strokeWidth="1.3" />
        </svg>
      </span>
      <span className="w-[690px]" />
      <span className="flex h-5 flex-1 items-center border-l border-[#d3d0cc] pl-1 pr-0.5">
        <span className="flex-1">总计 1 个文件夹 和 17,893 字节(1 个文件)</span>
        <Grip />
      </span>
    </footer>
  </section>
);

/* ---------- desktop ---------- */

const menus = ["文件(F)", "编辑(E)", "查看(V)", "工具(T)"];

export default function App() {
  return (
    <div className="relative h-screen cursor-default overflow-hidden bg-white font-['Noto_Sans','Noto_Sans_CJK_SC',sans-serif] text-xs text-black">
      {/* maximised window, runs a few pixels past the screen edge */}
      <main className="-mr-1 flex h-[calc(100%+3px)] flex-col bg-[#dae5f3] bg-[linear-gradient(#b9cdd8_0_4px,#c9cfdb_4px_10px,#d0d9ea_10px_16px,#dae5f3_16px)]">
        <Explorer
          maximized
          pathIcon={<StarIcon />}
          path="收藏夹"
          search="搜索 收藏夹"
          menus={[...menus, "帮助(H)"]}
          toolbar={
            <>
              <ToolButton className="gap-1.5">组织</ToolButton>
              <span className="flex-1" />
              <button aria-label="更改视图" className="flex items-center gap-2.5">
                <ThumbIcon />
                <Caret />
              </button>
              <button aria-label="预览窗格" className="ml-[22px]">
                <PreviewPaneIcon />
              </button>
              <button aria-label="帮助" className="ml-5 mr-[15px]">
                <HelpIcon />
              </button>
            </>
          }
          details={
            <>
              <div className="pl-5 pt-0.5">
                <BigStar />
              </div>
              <p className="pl-5 pt-1 text-[13px] leading-4 text-[#2b4468]">3 个对象</p>
            </>
          }
          status="3 个项目"
        >
          <div className="flex pl-[45px] pt-2">
            <div className="mr-10 shrink-0">
              <BigFolder />
            </div>
            <div className="mr-[17px] shrink-0">
              <BigFolder />
            </div>
            <div className="size-64 shrink-0 rounded-md border-2 border-[#ccced6]" />
          </div>
        </Explorer>
      </main>

      <section className="absolute left-[207px] top-[128px] flex h-[849px] w-[1185px] flex-col rounded-t-lg border border-[#40464f] bg-[#dae5f3] bg-[linear-gradient(#c6cfda_0_13px,#d0d9ea_13px_23px,#dae5f3_23px)] px-[7px] pb-[7px] pt-2">
        <Explorer
          pathIcon={<FolderIcon />}
          path="新建文件夹 (2)"
          search="搜索 新建..."
          menus={menus}
          toolbar={
            <>
              <ToolButton className="gap-1.5">组织</ToolButton>
              <ToolButton className="ml-[31px] gap-2.5">
                <span className="flex items-center gap-1">
                  <DwIcon />
                  打开
                </span>
              </ToolButton>
              <ToolButton className="ml-[31px] gap-1.5">共享</ToolButton>
            </>
          }
          details={
            <>
              <div className="pl-[18px] pt-1">
                <XmlFileIcon className="size-[44px]" />
              </div>
              <div className="pl-[15px] pt-[3px]">
                <p className="text-[13px] leading-[18px]">sheet1.xml</p>
                <p className="leading-[18px] text-[#5a6b84]">XML 文档</p>
              </div>
              <dl className="grid auto-rows-[18px] grid-cols-[auto_auto] content-start gap-x-1 pl-1.5 pt-[3px] leading-[18px] text-[#1e395b]">
                <dt className="text-right text-[#5a6b84]">修改日期:</dt>
                <dd>2018</dd>
                <dt className="text-right text-[#5a6b84]">大小:</dt>
                <dd>17.2</dd>
              </dl>
            </>
          }
          status="已选择 1 项"
          statusRight={
            <>
              <ComputerIcon />
              <span>计算机</span>
            </>
          }
        >
          <div className="pl-[15px] pt-[7px]">
            <figure className="flex h-[118px] w-[104px] flex-col items-center rounded-sm border border-[#ecdfe6] bg-[linear-gradient(#fdfdfd_50%,#f0dbe8_50%)] pt-px">
              <XmlFileIcon className="size-24" />
              <figcaption>sheet1.xml</figcaption>
            </figure>
          </div>
        </Explorer>
      </section>

      <RarWindow />

      {/* click highlight and pointer */}
      <div className="absolute left-[952px] top-[584px] size-[30px] rounded-full bg-[#73bd74]" />
      <svg viewBox="0 0 13 20" className="absolute left-[967px] top-[598px] h-5 w-[13px]">
        <path d="M.7 1V16L4.3 12.7 6.8 18.6 9.4 17.5 6.9 11.8H12Z" fill="#fff" stroke="#1a1d22" strokeWidth="1.1" />
      </svg>
    </div>
  );
}
